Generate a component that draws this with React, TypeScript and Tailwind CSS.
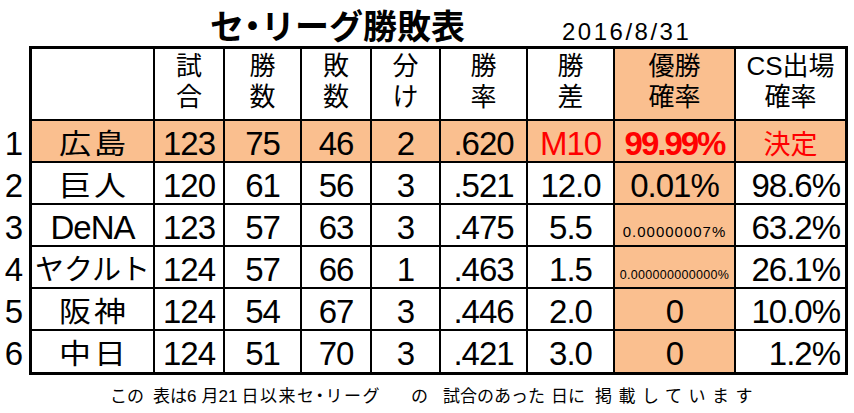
import React from 'react';
import clsx from 'clsx';

type Row = {
  rank: string;
  name: string;
  nameKind: 'kanji' | 'kana' | 'latin';
  g: string;
  w: string;
  l: string;
  d: string;
  pct: string;
  gb: string;
  win: string;
  winKind: 'big' | 'bold' | 'small8' | 'small12';
  cs: string;
  hl?: boolean;
};

const rows: Row[] = [
  { rank: '1', name: '広島', nameKind: 'kanji', g: '123', w: '75', l: '46', d: '2', pct: '.620', gb: 'M10', win: '99.99%', winKind: 'bold', cs: '決定', hl: true },
  { rank: '2', name: '巨人', nameKind: 'kanji', g: '120', w: '61', l: '56', d: '3', pct: '.521', gb: '12.0', win: '0.01%', winKind: 'big', cs: '98.6%' },
  { rank: '3', name: 'DeNA', nameKind: 'latin', g: '123', w: '57', l: '63', d: '3', pct: '.475', gb: '5.5', win: '0.00000007%', winKind: 'small8', cs: '63.2%' },
  { rank: '4', name: 'ヤクルト', nameKind: 'kana', g: '124', w: '57', l: '66', d: '1', pct: '.463', gb: '1.5', win: '0.000000000000%', winKind: 'small12', cs: '26.1%' },
  { rank: '5', name: '阪神', nameKind: 'kanji', g: '124', w: '54', l: '67', d: '3', pct: '.446', gb: '2.0', win: '0', winKind: 'big', cs: '10.0%' },
  { rank: '6', name: '中日', nameKind: 'kanji', g: '124', w: '51', l: '70', d: '3', pct: '.421', gb: '3.0', win: '0', winKind: 'big', cs: '1.2%' },
];

const headers: { top: string; bottom: string; orange?: boolean }[] = [
  { top: '', bottom: '' },
  { top: '試', bottom: '合' },
  { top: '勝', bottom: '数' },
  { top: '敗', bottom: '数' },
  { top: '分', bottom: 'け' },
  { top: '勝', bottom: '率' },
  { top: '勝', bottom: '差' },
  { top: '優勝', bottom: '確率', orange: true },
  { top: 'CS出場', bottom: '確率' },
];

function Cell({ orange, className, children }: { orange?: boolean; className?: string; children?: React.ReactNode }) {
  return (
    <div className={clsx('flex items-center justify-center whitespace-nowrap', orange ? 'bg-[#fabf8f]' : 'bg-white', className)}>
      {children}
    </div>
  );
}

function Num({ children, className }: { children: React.ReactNode; className?: string }) {
  return <span className={clsx('pt-[4px] text-[33px] leading-none tracking-[-1px]', className)}>{children}</span>;
}

export default function App() {
  return (
    <div className="h-[413px] w-[854px] overflow-hidden bg-white text-black font-['Liberation_Sans','Noto_Sans_CJK_JP',sans-serif]">
      {/* title */}
      <div className="flex h-[46px] items-end pl-[210px]">
        <span className="mb-[4px] text-[34px] font-bold leading-none font-['Noto_Sans_CJK_JP',sans-serif]">
          セ<span className="[font-feature-settings:'palt']">・</span>リーグ勝敗表
        </span>
        <span className="mb-[2px] ml-[97px] text-[24px] leading-none tracking-[2.5px]">2016/8/31</span>
      </div>

      <div className="flex">
        {/* rank numbers */}
        <div className="flex w-[29px] flex-col gap-[2px] pt-[75px]">
          {rows.map((r) => (
            <div key={r.rank} className="flex h-[40px] items-center justify-end pr-[6px] pt-[4px] text-[33px] leading-none">
              {r.rank}
            </div>
          ))}
        </div>

        {/* table */}
        <div className="grid grid-cols-[121px_68px_75px_68px_67px_85px_85px_119px_109px] grid-rows-[70px_40px_40px_40px_40px_40px_41px] gap-[2px] bg-black p-[3px]">
          {headers.map((h, i) => (
            <Cell key={`h${i}`} orange={h.orange} className="flex-col !justify-start pt-[2px] text-[26px] leading-[31px]">
              <span>{h.top}</span>
              <span>{h.bottom}</span>
            </Cell>
          ))}

          {rows.map((r) => (
            <React.Fragment key={r.rank}>
              <Cell orange={r.hl}>
                {r.nameKind === 'kanji' && (
                  <span className="inline-block scale-y-[0.88] pl-[3px] pt-[1px] text-[32px] leading-none tracking-[3px] font-['Noto_Sans_CJK_JP',sans-serif]">{r.name}</span>
                )}
                {r.nameKind === 'kana' && (
                  <span className="pt-[1px] text-[29px] leading-none font-['Noto_Sans_CJK_JP',sans-serif]">{r.name}</span>
                )}
                {r.nameKind === 'latin' && <Num>{r.name}</Num>}
              </Cell>
              <Cell orange={r.hl}><Num>{r.g}</Num></Cell>
              <Cell orange={r.hl}><Num>{r.w}</Num></Cell>
              <Cell orange={r.hl}><Num>{r.l}</Num></Cell>
              <Cell orange={r.hl}><Num>{r.d}</Num></Cell>
              <Cell orange={r.hl}><Num>{r.pct}</Num></Cell>
              <Cell orange={r.hl}>
                <Num className={r.hl ? 'text-[#ff0000]' : undefined}>{r.gb}</Num>
              </Cell>
              <Cell orange className={r.winKind === 'small8' || r.winKind === 'small12' ? '!items-end' : undefined}>
                {r.winKind === 'bold' && <Num className="font-bold text-[#ff0000] tracking-[-2px]">{r.win}</Num>}
                {r.winKind === 'big' && <Num>{r.win}</Num>}
                {r.winKind === 'small8' && (
                  <span className="mb-[6px] text-[15px] leading-none tracking-[1px]">{r.win}</span>
                )}
                {r.winKind === 'small12' && (
                  <span className="mb-[6px] text-[12.5px] leading-none tracking-[0.3px]">{r.win}</span>
                )}
              </Cell>
              <Cell orange={r.hl} className={r.hl ? undefined : '!justify-end pr-[5px]'}>
                {r.hl ? (
                  <span className="pt-[2px] text-[27px] leading-none text-[#ff0000] font-['Noto_Sans_CJK_JP',sans-serif]">{r.cs}</span>
                ) : (
                  <Num>{r.cs}</Num>
                )}
              </Cell>
            </React.Fragment>
          ))}
        </div>
      </div>

      {/* footer */}
      <div className="flex h-[38px] items-center whitespace-pre pl-[110px] pt-[4px] text-[17px] leading-none">
        <span>この</span>
        <span className="ml-[9px]">表は6</span>
        <span className="ml-[5px]">月21</span>
        <span className="ml-[4px] tracking-[1.5px]">
          日以来セ<span className="[font-feature-settings:'palt']">・</span>リーグ
        </span>
        <span className="ml-[30px]">の</span>
        <span className="ml-[15px]">試合のあった</span>
        <span className="ml-[6px]">日に</span>
        <span className="ml-[10px] tracking-[6.5px]">掲載しています</span>
      </div>
    </div>
  );
}
